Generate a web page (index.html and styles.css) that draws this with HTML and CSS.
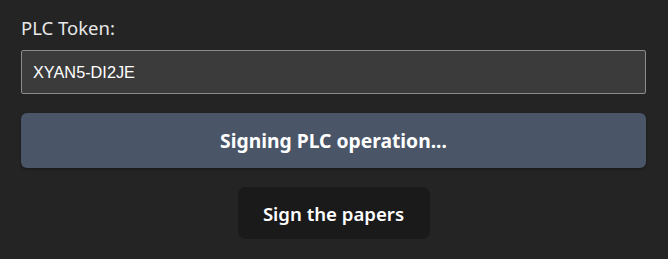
FILE: index.html
```html
<!DOCTYPE html>
<html lang="en">
<head>
<meta charset="utf-8">
<title>PLC Token</title>
<link rel="stylesheet" href="styles.css">
</head>
<body>
<main class="panel">
  <label class="field-label" for="token">PLC Token:</label>
  <input class="token-input" id="token" type="text" value="XYAN5-DI2JE">
  <button class="btn-primary" type="button" disabled>Signing PLC operation...</button>
  <div class="actions">
    <button class="btn-dark" type="button">Sign the papers</button>
  </div>
</main>
</body>
</html>
```
FILE: styles.css
```css
html, body {
  margin: 0;
  padding: 0;
  background: #242424;
}
body {
  width: 668px;
  height: 259px;
  overflow: hidden;
  font-family: "Noto Sans", "Open Sans", sans-serif;
  color: #e6e6e6;
}
.panel {
  display: flex;
  flex-direction: column;
  padding: 15px 22px 0 21px;
}
.field-label {
  font-size: 18.5px;
  line-height: 25px;
  color: #e8e8e8;
  margin-bottom: 10px;
}
.token-input {
  box-sizing: border-box;
  height: 44px;
  width: 100%;
  margin: 0;
  padding: 0 11px;
  background: #3b3b3b;
  border: 1px solid #8c8c8c;
  border-radius: 2px;
  color: #ffffff;
  font-family: "Liberation Sans", Arial, sans-serif;
  font-size: 16.3px;
  outline: none;
}
.btn-primary {
  margin-top: 19px;
  height: 55px;
  width: 100%;
  border: none;
  border-radius: 6px;
  background: #4a5568;
  color: #ffffff;
  font-family: "Noto Sans", "Open Sans", sans-serif;
  font-weight: 700;
  font-size: 19.3px;
  box-shadow: 0 1px 3px rgba(0,0,0,0.35);
}
.actions {
  display: flex;
  justify-content: center;
  margin-top: 19px;
}
.btn-dark {
  width: 192px;
  height: 52px;
  border: none;
  border-radius: 8px;
  background: #1a1a1a;
  color: #ffffff;
  font-family: "Noto Sans", "Open Sans", sans-serif;
  font-weight: 600;
  font-size: 18.6px;
}
```
